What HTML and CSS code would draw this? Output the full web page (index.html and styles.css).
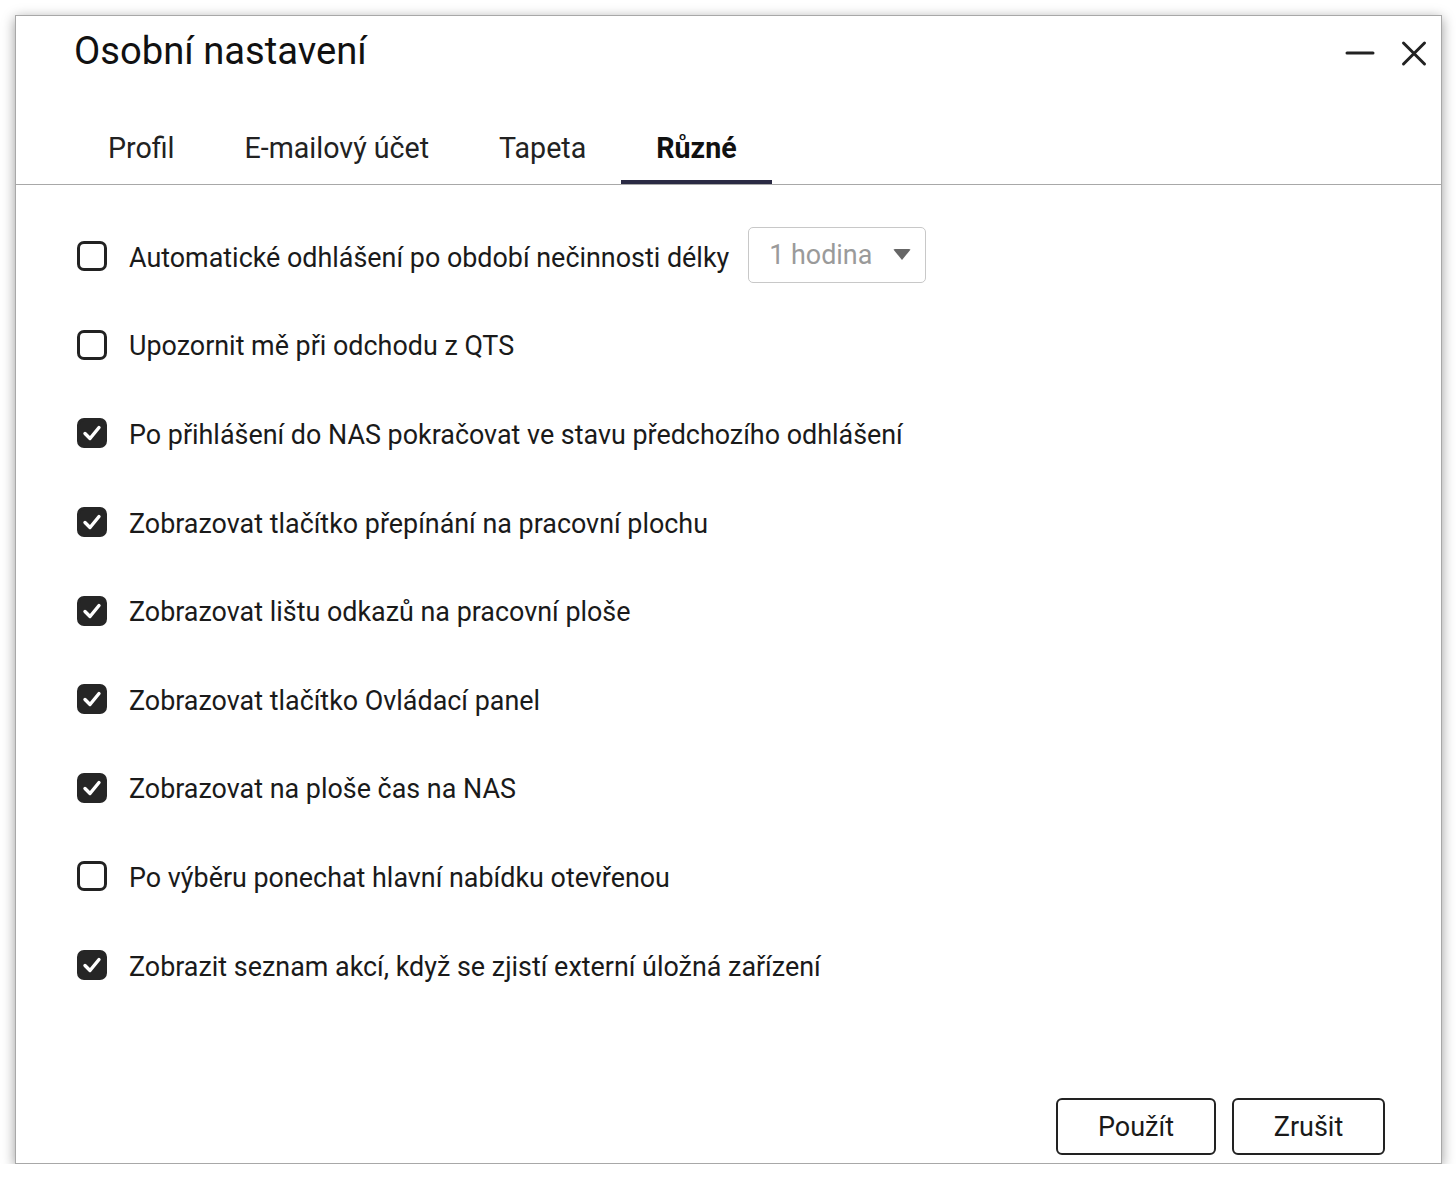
FILE: index.html
```html
<!DOCTYPE html>
<html lang="cs">
<head>
<meta charset="utf-8">
<title>Osobní nastavení</title>
<link rel="stylesheet" href="styles.css">
</head>
<body>
<div class="window">
  <div class="titlebar">
    <h1 class="title">Osobní nastavení</h1>
    <div class="controls">
      <svg class="ctl" width="30" height="30" viewBox="0 0 30 30"><line x1="2" y1="14" x2="28" y2="14" stroke="#222" stroke-width="3" stroke-linecap="round"/></svg>
      <svg class="ctl" width="30" height="30" viewBox="0 0 30 30"><path d="M4.5 4 L25.5 25 M25.5 4 L4.5 25" stroke="#222" stroke-width="3" stroke-linecap="round"/></svg>
    </div>
  </div>
  <div class="tabs">
    <div class="tab">Profil</div>
    <div class="tab">E-mailový účet</div>
    <div class="tab">Tapeta</div>
    <div class="tab active">Různé</div>
  </div>
  <div class="content">
    <div class="row">
      <span class="cb"></span>
      <span class="label">Automatické odhlášení po období nečinnosti délky</span>
      <div class="select"><span>1 hodina</span><span class="caret"></span></div>
    </div>
    <div class="row"><span class="cb"></span><span class="label">Upozornit mě při odchodu z QTS</span></div>
    <div class="row"><span class="cb on"><svg viewBox="0 0 30 30" width="30" height="30"><path d="M8 15.5 L13 20.5 L22 9.5" fill="none" stroke="#fff" stroke-width="3.4" stroke-linecap="round" stroke-linejoin="round"/></svg></span><span class="label">Po přihlášení do NAS pokračovat ve stavu předchozího odhlášení</span></div>
    <div class="row"><span class="cb on"><svg viewBox="0 0 30 30" width="30" height="30"><path d="M8 15.5 L13 20.5 L22 9.5" fill="none" stroke="#fff" stroke-width="3.4" stroke-linecap="round" stroke-linejoin="round"/></svg></span><span class="label">Zobrazovat tlačítko přepínání na pracovní plochu</span></div>
    <div class="row"><span class="cb on"><svg viewBox="0 0 30 30" width="30" height="30"><path d="M8 15.5 L13 20.5 L22 9.5" fill="none" stroke="#fff" stroke-width="3.4" stroke-linecap="round" stroke-linejoin="round"/></svg></span><span class="label">Zobrazovat lištu odkazů na pracovní ploše</span></div>
    <div class="row"><span class="cb on"><svg viewBox="0 0 30 30" width="30" height="30"><path d="M8 15.5 L13 20.5 L22 9.5" fill="none" stroke="#fff" stroke-width="3.4" stroke-linecap="round" stroke-linejoin="round"/></svg></span><span class="label">Zobrazovat tlačítko Ovládací panel</span></div>
    <div class="row"><span class="cb on"><svg viewBox="0 0 30 30" width="30" height="30"><path d="M8 15.5 L13 20.5 L22 9.5" fill="none" stroke="#fff" stroke-width="3.4" stroke-linecap="round" stroke-linejoin="round"/></svg></span><span class="label">Zobrazovat na ploše čas na NAS</span></div>
    <div class="row"><span class="cb"></span><span class="label">Po výběru ponechat hlavní nabídku otevřenou</span></div>
    <div class="row"><span class="cb on"><svg viewBox="0 0 30 30" width="30" height="30"><path d="M8 15.5 L13 20.5 L22 9.5" fill="none" stroke="#fff" stroke-width="3.4" stroke-linecap="round" stroke-linejoin="round"/></svg></span><span class="label">Zobrazit seznam akcí, když se zjistí externí úložná zařízení</span></div>
  </div>
  <div class="footer">
    <button class="btn btn-apply">Použít</button>
    <button class="btn btn-cancel">Zrušit</button>
  </div>
</div>
</body>
</html>
```
FILE: styles.css
```css
html, body {
  margin: 0;
  padding: 0;
  background: #fff;
}
body {
  font-family: Roboto, "Noto Sans", sans-serif;
  color: #1a1a1a;
  padding: 15px 0 0 15px;
}
.window {
  width: 1425px;
  height: 1147px;
  background: #fff;
  border: 1px solid #a8a8a8;
  box-shadow: 0 3px 12px rgba(0, 0, 0, 0.4);
  display: flex;
  flex-direction: column;
  box-sizing: content-box;
}
.titlebar {
  display: flex;
  align-items: flex-start;
  justify-content: space-between;
  height: 98px;
  padding: 0 0 0 58px;
}
.title {
  margin: 13px 0 0 0;
  font-size: 38.2px;
  font-weight: 400;
  color: #111;
}
.controls {
  display: flex;
  gap: 24px;
  margin: 23px 12px 0 0;
}
.tabs {
  display: flex;
  padding-left: 57px;
  border-bottom: 1.5px solid #a8a8a8;
  height: 70px;
}
.tab {
  padding: 0 35px;
  font-size: 28.6px;
  color: #222;
  line-height: 68px;
  border-bottom: 4px solid transparent;
}
.tab.active {
  font-weight: 700;
  color: #111;
  border-bottom-color: #2a2a44;
}
.content {
  flex: 1;
  padding: 27px 0 0 61px;
  display: flex;
  flex-direction: column;
}
.row {
  display: flex;
  align-items: center;
  height: 88.6px;
  flex: none;
}
.cb {
  width: 30px;
  height: 30px;
  box-sizing: border-box;
  border: 3px solid #222;
  border-radius: 7px;
  display: inline-flex;
  align-items: center;
  justify-content: center;
  flex: none;
  margin-right: 22px;
}
.cb.on {
  background: #262626;
  border-color: #262626;
}
.cb.on svg {
  width: 30px;
  height: 30px;
  flex: none;
}
.label {
  font-size: 26.9px;
  color: #1a1a1a;
  padding-top: 3px;
}
.select {
  margin-left: 19px;
  width: 178px;
  height: 56px;
  box-sizing: border-box;
  border: 1.5px solid #c8c8c8;
  border-radius: 5px;
  display: flex;
  align-items: center;
  justify-content: space-between;
  padding: 0 14px 0 20px;
  font-size: 26.9px;
  color: #9a9a9a;
  margin-top: -3px;
}
.caret {
  width: 0;
  height: 0;
  border-left: 9px solid transparent;
  border-right: 9px solid transparent;
  border-top: 11px solid #666;
  border-radius: 2px;
}
.footer {
  display: flex;
  justify-content: flex-end;
  gap: 16px;
  padding: 0 56px 8px 0;
}
.btn {
  height: 57px;
  box-sizing: border-box;
  background: #fff;
  border: 2px solid #222;
  border-radius: 6px;
  font-family: Roboto, "Noto Sans", sans-serif;
  font-size: 27px;
  color: #1a1a1a;
  padding: 0;
}
.btn-apply { width: 160px; }
.btn-cancel { width: 153px; }
```
